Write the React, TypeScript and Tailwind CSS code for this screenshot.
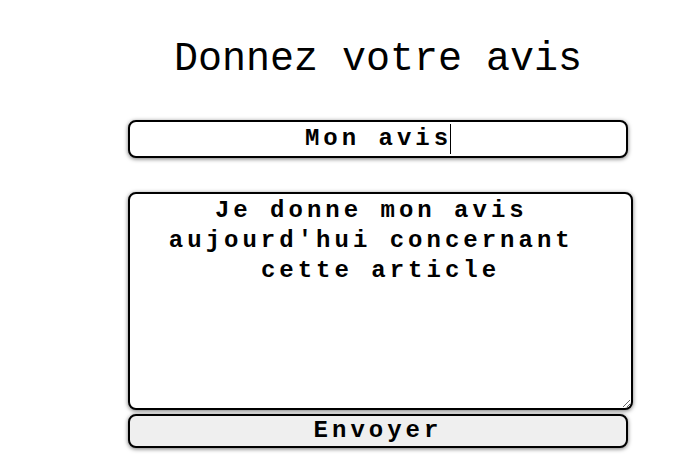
import React from "react";

export default function App() {
  return (
    <div className="min-h-[474px] w-full bg-white font-['Liberation_Mono','Courier_New',monospace] text-black">
      <div className="ml-[128px] flex w-[505px] flex-col pt-[37px]">
        <h1 className="w-[500px] text-center text-[40px] leading-[45px] font-normal">
          Donnez votre avis
        </h1>
        <div
          role="textbox"
          className="mt-[38px] flex h-[38px] w-[500px] items-center justify-center rounded-[8px] border-2 border-black bg-white text-[24px] leading-[30px] font-bold tracking-[4px] shadow-[0_1px_4px_rgba(0,0,0,0.55)]"
        >
          <span>Mon avis</span>
          <span className="ml-[-2px] inline-block h-[30px] w-[1px] bg-black" />
        </div>
        <textarea
          readOnly
          defaultValue="Je donne mon avis aujourd'hui concernant cette article"
          className="mt-[34px] h-[218px] w-[505px] resize whitespace-break-spaces rounded-[8px] border-2 border-black bg-white px-[4px] pt-[2px] text-center font-['Liberation_Mono','Courier_New',monospace] text-[24px] leading-[30px] font-bold tracking-[4px] text-black shadow-[0_1px_4px_rgba(0,0,0,0.55)] outline-none"
        />
        <button
          type="button"
          className="mt-[4px] flex h-[34px] w-[500px] items-center justify-center rounded-[8px] border-2 border-black bg-[#efefef] text-[24px] leading-[30px] font-bold tracking-[4px] text-black shadow-[0_1px_4px_rgba(0,0,0,0.55)]"
        >
          Envoyer
        </button>
      </div>
    </div>
  );
}
